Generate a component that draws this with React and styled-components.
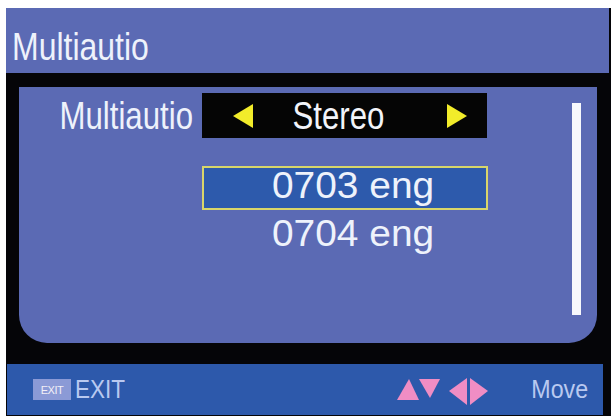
import React from "react";
import styled, { createGlobalStyle } from "styled-components";

const Global = createGlobalStyle`
  html, body { margin: 0; padding: 0; background: #ffffff; }
  body { font-family: "Liberation Sans", Arial, sans-serif; }
`;

const Screen = styled.div`
  margin: 8px 0 0 6px;
  width: 605px;
  height: 408px;
  background: #050508;
  display: flex;
  flex-direction: column;
`;

const Header = styled.div`
  height: 65px;
  margin-right: 2px;
  background: #5b6ab4;
  display: flex;
  align-items: center;
  padding: 12px 0 0 6px;
  box-sizing: border-box;
`;

const Title = styled.span`
  display: inline-block;
  font-family: "Liberation Sans", Arial, sans-serif;
  font-size: 39px;
  color: #eef2fb;
  white-space: nowrap;
  transform: scaleX(0.82);
  transform-origin: left center;
`;

const Body = styled.div`
  padding: 14px 14px 0 13px;
`;

const Panel = styled.div`
  height: 256px;
  background: #5b6ab4;
  border-radius: 0 0 28px 28px;
  display: flex;
  box-sizing: border-box;
  padding: 6px 0 0 0;
`;

const Content = styled.div`
  width: 470px;
  display: flex;
  flex-direction: column;
`;

const OptionRow = styled.div`
  display: flex;
  align-items: center;
  height: 45px;
`;

const Label = styled.span`
  display: inline-block;
  width: 174px;
  text-align: right;
  font-family: "Liberation Sans", Arial, sans-serif;
  font-size: 39px;
  color: #eef2fb;
  margin-right: 9px;
  white-space: nowrap;
  transform: scaleX(0.8);
  transform-origin: right center;
`;

const Selector = styled.div`
  width: 285px;
  height: 45px;
  background: #050505;
  display: flex;
  align-items: center;
  justify-content: space-between;
  padding: 0 20px 0 31px;
  box-sizing: border-box;
`;

const SelectorText = styled.span`
  display: inline-block;
  font-family: "Liberation Sans", Arial, sans-serif;
  font-size: 39px;
  color: #f2f4fa;
  margin-right: 24px;
  transform: scaleX(0.8);
`;

const List = styled.div`
  margin-top: 28px;
  margin-left: 183px;
  width: 286px;
  display: flex;
  flex-direction: column;
  gap: 4px;
`;

const Item = styled.div`
  height: 44px;
  box-sizing: border-box;
  border: 2px solid ${(p) => (p.$active ? "#d8d66a" : "transparent")};
  background: ${(p) => (p.$active ? "#2d5aac" : "transparent")};
  display: flex;
  align-items: flex-start;
  justify-content: center;
  padding-left: 17px;
`;

const ItemText = styled.span`
  display: inline-block;
  font-family: "Liberation Sans", Arial, sans-serif;
  font-size: 36px;
  line-height: 36px;
  color: #eef2fb;
  transform: scaleX(1.08);
`;

const Track = styled.div`
  margin: 10px 0 0 83px;
  width: 9px;
  height: 212px;
  background: #f7f8fc;
`;

const Gap = styled.div`
  height: 21px;
`;

const Footer = styled.div`
  height: 51px;
  margin: 0 8px 0 1px;
  background: #2d59ab;
  display: flex;
  align-items: center;
  padding: 0 15px 0 26px;
`;

const ExitKey = styled.span`
  width: 38px;
  height: 21px;
  background: #8b9ad6;
  color: #f3f0f6;
  font-family: "Liberation Sans", Arial, sans-serif;
  font-size: 11px;
  display: flex;
  align-items: center;
  justify-content: center;
  letter-spacing: -0.5px;
  margin-right: 4px;
`;

const FooterText = styled.span`
  display: inline-block;
  font-family: "Liberation Sans", Arial, sans-serif;
  font-size: 25px;
  color: #b9c9f0;
  transform: scaleX(${(p) => (p.$right ? 0.93 : 0.9)});
  transform-origin: ${(p) => (p.$right ? "right" : "left")} center;
`;

const Spacer = styled.div`
  flex: 1;
`;

const Arrows = styled.svg`
  margin: 4px 38px 0 0;
`;

const Tri = ({ dir }) => {
  const pts = dir === "left" ? "0,12 20,0 20,24" : "0,0 20,12 0,24";
  return (
    <svg width="20" height="24" viewBox="0 0 20 24">
      <polygon points={pts} fill="#f2ec2a" />
    </svg>
  );
};

export default function App() {
  return (
    <>
      <Global />
      <Screen>
        <Header>
          <Title>Multiautio</Title>
        </Header>
        <Body>
          <Panel>
            <Content>
              <OptionRow>
                <Label>Multiautio</Label>
                <Selector>
                  <Tri dir="left" />
                  <SelectorText>Stereo</SelectorText>
                  <Tri dir="right" />
                </Selector>
              </OptionRow>
              <List>
                <Item $active>
                  <ItemText>0703 eng</ItemText>
                </Item>
                <Item>
                  <ItemText>0704 eng</ItemText>
                </Item>
              </List>
            </Content>
            <Track />
          </Panel>
        </Body>
        <Gap />
        <Footer>
          <ExitKey>EXIT</ExitKey>
          <FooterText>EXIT</FooterText>
          <Spacer />
          <Arrows width="92" height="28" viewBox="0 0 92 28">
            <polygon points="0,22 12,1 22,22" fill="#f08dc4" />
            <polygon points="22,1 43,1 33,20" fill="#f08dc4" />
            <polygon points="52,13 70,0 70,27" fill="#f08dc4" />
            <polygon points="73,0 91,13 73,27" fill="#f08dc4" />
          </Arrows>
          <FooterText $right>Move</FooterText>
        </Footer>
      </Screen>
    </>
  );
}
